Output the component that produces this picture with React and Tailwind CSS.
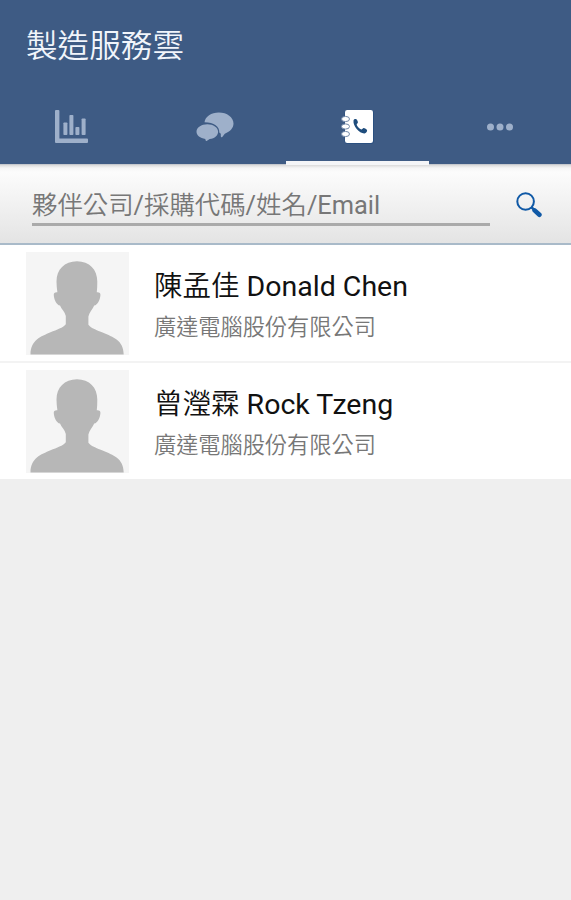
import React from "react";

const contacts = [
  { cjk: "陳孟佳", latin: "Donald Chen", company: "廣達電腦股份有限公司" },
  { cjk: "曾瀅霖", latin: "Rock Tzeng", company: "廣達電腦股份有限公司" },
];

function ChartIcon() {
  return (
    <svg width="34" height="34" viewBox="0 0 34 34" fill="#9eb0ca" className="block">
      <path d="M1 0h2.4q1 0 1 1v27.6H32q1 0 1 1v2.4q0 1-1 1H1q-1 0-1-1V1q0-1 1-1Z" />
      <rect x="8.4" y="12.5" width="4" height="12.5" rx="0.8" />
      <rect x="14.4" y="5" width="4" height="20" rx="0.8" />
      <rect x="20.4" y="17" width="4" height="8" rx="0.8" />
      <rect x="26.6" y="8.5" width="4" height="16.5" rx="0.8" />
    </svg>
  );
}

function ChatIcon() {
  return (
    <svg width="38" height="30" viewBox="0 0 38 30" fill="#9eb0ca" className="block">
      <path d="M8.5 10.3C9.2 4.6 15.3.5 22.8.5 31 .5 37.500 5.200 37.500 11.600c0 4.300-3.200 8.200-8.700 10.100l-2.500 3.300c-.9.500-1.400.2-1.500-.7v-2.600l-1.500-1.100c.5-5.900-5.200-10.100-14.800-10.300Z" />
      <path d="M11.300 12.300c6 0 10.800 3.200 10.800 7.500 0 3.700-3.200 6.600-8.400 7.300l-2.700 1.700c-.8.400-1.300.1-1.500-.8l-.2-1.100C4.200 26.200.5 23.400.5 19.800c0-4.300 4.800-7.500 10.800-7.500Z" />
    </svg>
  );
}

function PhoneBookIcon() {
  return (
    <svg width="34" height="36" viewBox="0 0 34 36" className="ml-px block">
      <rect x="3.500" y="1" width="29.500" height="34" rx="3" fill="#2b5080" />
      <rect x="4" y="1" width="28" height="33" rx="2.200" fill="#fff" />
      <g fill="#fff" stroke="#7288a8" strokeWidth="1">
        <ellipse cx="4.500" cy="10" rx="4" ry="2.600" />
        <ellipse cx="4.500" cy="17.500" rx="4" ry="2.600" />
        <ellipse cx="4.500" cy="25" rx="4" ry="2.600" />
      </g>
      <path
        d="M12.500 11.500c.4-1.200 1.500-1.600 2.500-1.400.9.200 2 2.500 1.900 3.500 0 .8-1 1.100-1.200 1.800.3 2 2.900 4.600 4.900 5.100.9-.2 1.200-1.300 2-1.400 1 0 3.300 1.200 3.500 2.100.2 1.500-1.100 3-2.600 3.200-4.900.3-11.800-7.200-11-12.900Z"
        fill="#1e4c7c"
      />
    </svg>
  );
}

function MoreIcon() {
  return (
    <svg width="26" height="8" viewBox="0 0 26 8" fill="#9eb0ca" className="mr-0.5 block">
      <circle cx="3.500" cy="4" r="3.500" />
      <circle cx="13" cy="4" r="3.500" />
      <circle cx="22.500" cy="4" r="3.500" />
    </svg>
  );
}

function SearchIcon() {
  return (
    <svg width="26" height="26" viewBox="0 0 26 26" fill="none" stroke="#1059a6" className="block">
      <circle cx="9.600" cy="9.500" r="8.300" strokeWidth="2" />
      <path d="m15.600 15.500 2.800 2.400" strokeWidth="2.500" />
      <path d="m18.600 18.400 4.800 4.400" strokeWidth="4.600" strokeLinecap="round" />
    </svg>
  );
}

function Avatar() {
  return (
    <svg width="103" height="103" viewBox="0 0 103 103" className="block shrink-0">
      <rect width="103" height="103" fill="#f5f5f5" />
      <path
        d="M51 9.300c12.500 0 20.300 8.300 20.300 20.200 0 3.700-.1 7.300-.5 10.700 2.600-.2 3.900.9 3.600 3.300-.5 4.800-2.700 9.300-6.200 10.100-1.600 4-4.800 6.500-5.800 10.900v8.200c2.900 3.600 8.300 5.300 14.800 8.100 9.500 4.200 20.400 7.300 20.500 21.700H4.500C4.600 88.100 15 84.500 24.500 80.300c6.500-2.800 12.400-4.500 15.300-8.100V64c-1-4.400-4.200-6.400-5.800-10.400-3.500-.8-5.700-5.300-6.200-10.100-.3-2.400 1-3.500 3.600-3.300-.5-3.400-.9-7-.9-10.700C30.500 17.600 38.500 9.300 51 9.300Z"
        fill="#b7b7b7"
      />
    </svg>
  );
}

function Tab({ active, children }) {
  return (
    <div
      className={
        "flex flex-1 items-center justify-center border-b-4 pt-1 " +
        (active ? "border-[#f4f5f7]" : "border-transparent")
      }
    >
      {children}
    </div>
  );
}

export default function App() {
  return (
    <div className="flex h-[900px] w-[571px] flex-col overflow-hidden bg-[#efefef] font-['Roboto','Noto_Sans_CJK_TC',sans-serif]">
      <header className="relative z-10 flex h-[164px] shrink-0 flex-col bg-[#3e5b84]">
        <h1 className="flex h-[87px] items-center pl-[26px] font-['Noto_Sans_CJK_TC',sans-serif] text-[31.6px] leading-none font-[350] text-[#f1f5fb]">
          製造服務雲
        </h1>
        <nav className="-mr-px -mb-px flex flex-1 pt-0.5">
          <Tab><ChartIcon /></Tab>
          <Tab><ChatIcon /></Tab>
          <Tab active><PhoneBookIcon /></Tab>
          <Tab><MoreIcon /></Tab>
        </nav>
      </header>

      <div className="flex h-[81px] shrink-0 items-start border-b-2 border-[#a9bac9] bg-[linear-gradient(to_bottom,#b9bec6_0px,#dedede_1.5px,#f5f5f5_4px,#fcfcfc_8px,#e4e4e4_79px)] pl-8">
        <div className="mt-[22px] flex h-[40px] w-[458px] items-center border-b-[3px] border-[#aaaaaa] pt-0.5 text-[25.4px] leading-none font-[350] whitespace-nowrap text-[#777777]">
          <span>
            夥伴公司<span className="font-normal">/</span>採購代碼<span className="font-normal">/</span>姓名<span className="font-normal">/Email</span>
          </span>
        </div>
        <button className="mt-7 ml-[26px]" aria-label="搜尋">
          <SearchIcon />
        </button>
      </div>

      <ul className="shrink-0 divide-y-2 divide-[#f3f3f3] bg-white">
        {contacts.map((c) => (
          <li key={c.latin} className="box-content flex h-[116px]">
            <div className="flex gap-[25px] pt-[7px] pl-[26px]">
              <Avatar />
              <div className="flex flex-col pt-4">
                <div className="h-[38px] text-[28.5px] leading-[38px] whitespace-nowrap text-[#111111]">
                  <span className="font-[350]">{c.cjk}</span> {c.latin}
                </div>
                <div className="mt-1 h-[30px] font-['Noto_Sans_CJK_TC',sans-serif] text-[22.2px] leading-[30px] font-[350] whitespace-nowrap text-[#777777]">
                  {c.company}
                </div>
              </div>
            </div>
          </li>
        ))}
      </ul>
    </div>
  );
}
